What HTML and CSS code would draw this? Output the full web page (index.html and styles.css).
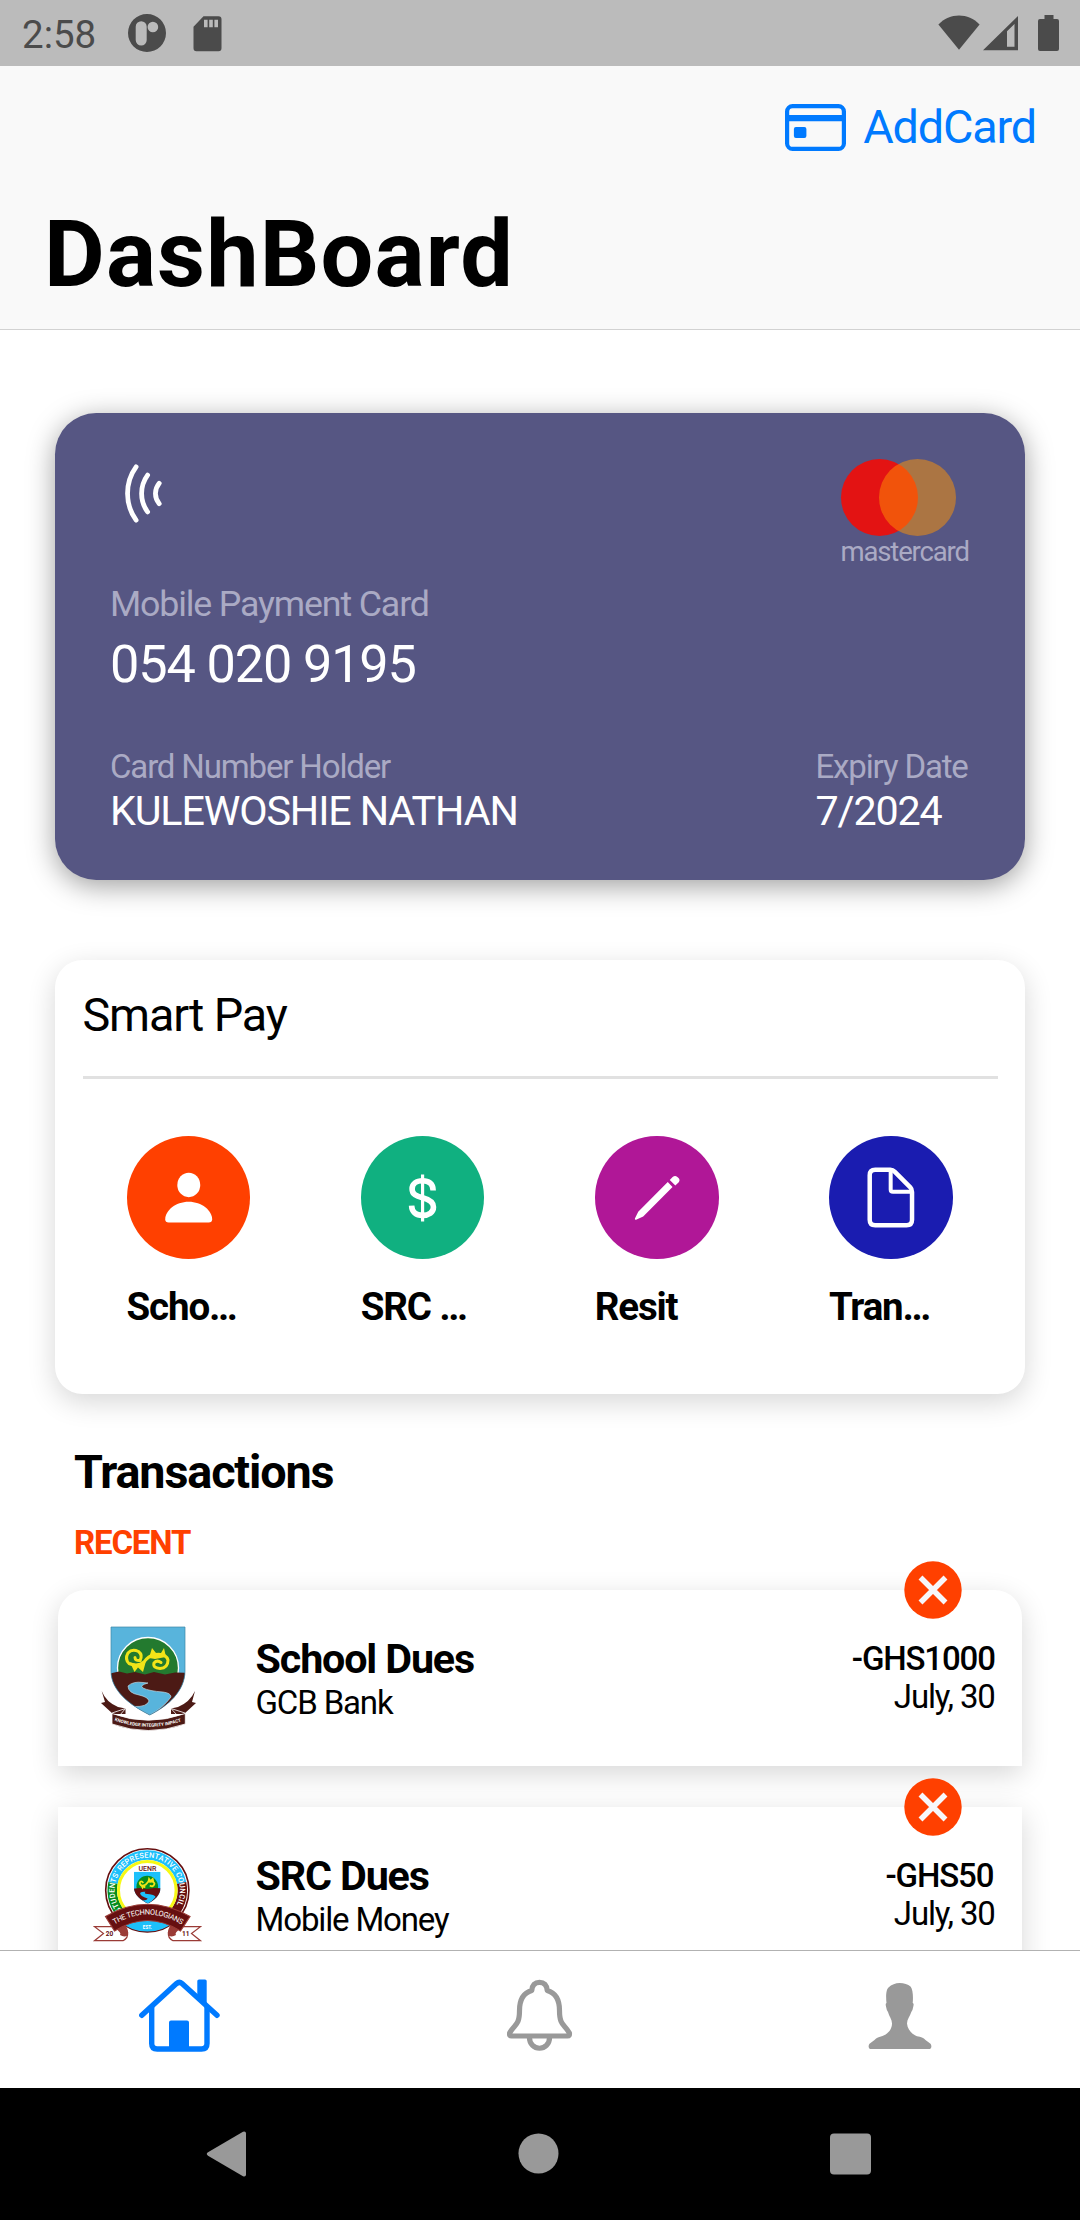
FILE: index.html
```
<!DOCTYPE html>
<html lang="en">
<head>
<meta charset="utf-8">
<title>DashBoard</title>
<link rel="stylesheet" href="styles.css">
</head>
<body>
<div class="screen">
  <div class="status">
    <div class="status-left">
      <span class="clock">2:58</span>
      <svg class="ic-app" width="38" height="38" viewBox="0 0 38 38"><path fill="#4b4b4b" fill-rule="evenodd" d="M19 0a19 19 0 1 1 0 38a19 19 0 1 1 0-38zM13.2 7.2a5.5 5.5 0 0 0-5.5 5.5v13.4a5.5 5.5 0 0 0 11 0V12.700a5.5 5.5 0 0 0-5.5-5.500zM24.900 7.700a5.300 5.300 0 1 0 0 10.600a5.300 5.300 0 1 0 0-10.600z"/></svg>
      <svg class="ic-sd" width="29" height="36" viewBox="0 0 29 36"><path fill="#4b4b4b" fill-rule="evenodd" d="M10.500.3H25.500a3 3 0 0 1 3 3V32.300a3 3 0 0 1-3 3H3.500a3 3 0 0 1-3-3V10.700zM11 3.700v7.500h3.600V3.700zM16.200 3.700v7.500h3.600V3.700zM21.400 3.700v7.500H25V3.700z"/></svg>
    </div>
    <div class="status-right">
      <svg width="42" height="36" viewBox="0 0 42 36"><path fill="#4b4b4b" d="M21 34.800L.4 9.500C6 3.500 13.500.5 21 .5s15 3 20.600 9z"/></svg>
      <svg class="ic-signal" width="36" height="36" viewBox="0 0 36 36"><path fill="#4b4b4b" fill-rule="evenodd" d="M35 1V35.300H0zM24 16.200V31.800H31.500V9z"/></svg>
      <svg width="21" height="37" viewBox="0 0 21 37"><path fill="#4b4b4b" d="M6.500 0h9v4H19a2 2 0 0 1 2 2v28a2 2 0 0 1-2 2H2a2 2 0 0 1-2-2V6a2 2 0 0 1 2-2h4.500z"/></svg>
    </div>
  </div>

  <header class="header">
    <div class="add-card">
      <svg width="61" height="47" viewBox="0 0 61 47"><rect x="2.100" y="2.100" width="56.800" height="42.800" rx="5.500" fill="none" stroke="#007aff" stroke-width="4.200"/><path fill="#007aff" d="M3 11h55v6.300H3z"/><rect x="8.900" y="23" width="12.500" height="11" rx="2" fill="#007aff"/></svg>
      <span>AddCard</span>
    </div>
    <h1 class="title">DashBoard</h1>
  </header>

  <main class="content">
    <section class="card">
      <div class="card-top">
        <svg class="contactless" width="40" height="60" viewBox="0 0 40 60" fill="none" stroke="#fff" stroke-width="4.800" stroke-linecap="round"><path d="M11.100 2.900C-.3 18.500-.3 40.500 11.100 56.100M22.600 11.100C14.600 22 14.600 37 22.600 47.900M34.200 19.300C29.200 25.500 29.200 33.500 34.200 39.700"/></svg>
        <div class="brand">
          <div class="brand-mark"><span class="dot dot-red"></span><span class="dot dot-amber"></span></div>
          <span class="brand-name">mastercard</span>
        </div>
      </div>
      <div class="card-type">Mobile Payment Card</div>
      <div class="card-number">054 020 9195</div>
      <div class="card-foot">
        <div>
          <div class="label">Card Number Holder</div>
          <div class="value">KULEWOSHIE NATHAN</div>
        </div>
        <div class="expiry">
          <div class="label">Expiry Date</div>
          <div class="value">7/2024</div>
        </div>
      </div>
    </section>

    <section class="smart">
      <h2 class="smart-title">Smart Pay</h2>
      <div class="rule"></div>
      <div class="services">
        <div class="service">
          <svg class="bubble school" viewBox="0 0 124 124"><ellipse cx="61.900" cy="49" rx="11.500" ry="12.300" fill="#fff"/><path fill="#fff" d="M61.800 66C75 66 85.300 75 85.300 83.500Q85.300 86.700 81.800 86.700H41.800Q38.300 86.700 38.300 83.500C38.300 75 48.600 66 61.800 66z"/></svg>
          <span class="service-name">Scho…</span>
        </div>
        <div class="service">
          <svg class="bubble src" viewBox="0 0 124 124" fill="none" stroke="#fff"><path stroke-width="5.600" d="M72.300 54.500C72.300 47.500 67.500 44.800 61.700 44.800C55.500 44.800 51.200 48 51.200 53C51.200 58.500 55.500 60.200 61.700 61.900C68.500 63.700 72.600 65.900 72.600 71.200C72.600 76.500 68 79.500 61.700 79.500C55 79.500 50.900 76 50.700 69.800"/><path stroke-width="3.200" d="M61.700 38.700V85.700"/></svg>
          <span class="service-name">SRC …</span>
        </div>
        <div class="service">
          <svg class="bubble resit" viewBox="0 0 124 124"><path fill="#fff" d="M72.900 46L77.700 51L48.300 80.600L41.200 83.900Q39.600 84.200 40 82.600L43.300 75.900zM74.900 44L77.800 41.100Q80.200 39 82.500 41L83.700 42.200Q85.700 44.400 83.700 46.600L80.500 49.500z"/></svg>
          <span class="service-name">Resit</span>
        </div>
        <div class="service">
          <svg class="bubble trans" viewBox="0 0 124 124" fill="none" stroke="#fff" stroke-width="4.500" stroke-linejoin="round"><path d="M46.300 33.900H61.500Q64 33.900 66 35.900L81.500 51.500Q83.200 53.200 83.200 56V84Q83.200 89.500 77.700 89.500H46.300Q40.800 89.500 40.800 84V39.400Q40.800 33.900 46.300 33.900z"/><path stroke-width="4" d="M61.800 34V53.600Q61.800 55.900 64.100 55.900H83"/></svg>
          <span class="service-name">Tran…</span>
        </div>
      </div>
    </section>

    <h2 class="section-title">Transactions</h2>
    <div class="section-tag">RECENT</div>

    <ul class="list">
      <li class="item item-first">
        <svg class="logo" width="120" height="120" viewBox="0 0 120 120">
          <defs><clipPath id="shield"><path id="shield-shape" d="M24 10H98V54C98 74 81 89 62.700 98C43 88 24 74 24 54z"/></clipPath></defs>
          <g clip-path="url(#shield)">
            <path fill="#58b4dc" d="M20 5h82v95H20z"/>
            <circle cx="61" cy="51" r="30.500" fill="#237a2f" stroke="#fff" stroke-width="1.300"/>
            <path fill="#4c1a15" d="M20 57L32 54.500L40 56.500L48 55L58 57.500L67 55L78 57.500L88 55.500L102 56V102H20z"/>
            <path fill="#58b4dc" stroke="#cfe6f0" stroke-width=".6" d="M41 69Q46 64 56 65.500L61 66Q52 68.500 56 71Q62 74 76 75Q84 76 84 80Q76 91 62.700 98Q54 94 47 89.500Q60 90 62 84Q61 80 52 78Q41 76 41 69z"/>
          </g>
          <use href="#shield-shape" fill="none" stroke="#3d87a8" stroke-width=".7"/>
          <g fill="none" stroke="#f2e418" stroke-width="3" stroke-linecap="round"><path d="M53 43.500Q56 38 51.500 34.500Q45 31.500 41 36Q37.500 42 42 46.500Q51 50 57 45Q61 39 68 37.500Q79 36 81 43Q81 51 73 51.500Q65.500 51 67 46Q70 42.500 74 45.500"/><path d="M53 43.500Q48 44 48 40.500"/></g>
          <path fill="#f2e418" d="M62 41L65 31L69 36L74 36L77 31L79 40L68 42zM43 45.500L47.500 55L51 50.500L56 55L59 44L51 47.500z"/>
          <path fill="#4c1a15" d="M14.700 74Q19 85 31 90L38.500 91.500V97L26 97L14 86L18 85z"/>
          <path fill="#4c1a15" d="M108 74Q103 85 91 90L84 91.500V97L97 97L109 86L105 85z"/>
          <path fill="#4c1a15" stroke="#fff" stroke-width=".8" d="M25 96.500Q61 110 98.300 96.500V107Q61 120 25 107z"/>
          <path stroke="#fff" stroke-width=".8" fill="none" d="M25 96L38.500 91.500L33 98M98 96L84 91.500L90 98"/>
          <path id="motto" fill="none" d="M27.500 103.500Q61.500 116 97 103.500"/>
          <text class="motto"><textPath href="#motto" textLength="68">KNOWLEDGE INTEGRITY IMPACT</textPath></text>
        </svg>
        <div class="item-body">
          <div class="item-title">School Dues</div>
          <div class="item-sub">GCB Bank</div>
        </div>
        <div class="item-side">
          <div class="amount">-GHS1000</div>
          <div class="date">July, 30</div>
        </div>
        <svg class="badge" width="58" height="58" viewBox="0 0 58 58"><circle cx="29" cy="29" r="28.700" fill="#ff4000"/><path d="M16.500 16.500L41.500 41.500M41.500 16.500L16.500 41.500" stroke="#f7f7fa" stroke-width="5.500"/></svg>
      </li>
      <li class="item">
        <svg class="logo" width="120" height="120" viewBox="0 0 120 120">
          <circle cx="60.300" cy="56.300" r="41.600" fill="#fff" stroke="#660f10" stroke-width="1.600"/>
          <g fill="none" stroke-width="9.500">
            <path stroke="#1cc0fb" d="M26 49A35 35 0 0 1 94.600 49"/>
            <path stroke="#078c1c" d="M26 49A35 35 0 0 0 37 82.500"/>
            <path stroke="#660f10" d="M94.600 49A35 35 0 0 1 83.600 82.500"/>
          </g>
          <circle cx="60.300" cy="56.300" r="28.800" fill="#fff" stroke="#f6f915" stroke-width="3"/>
          <path id="ring" fill="none" d="M34.700 76.700A32.700 32.700 0 1 1 86.200 76.300"/>
          <text class="ring-text"><textPath href="#ring" textLength="139">STUDENTS’ REPRESENTATIVE COUNCIL</textPath></text>
          <text class="uenr" x="60.500" y="36.500">UENR</text>
          <g transform="translate(38.300 34.200) scale(.36)">
            <g clip-path="url(#shield)">
              <path fill="#1cc0fb" d="M20 5h82v95H20z"/>
              <circle cx="61" cy="51" r="30" fill="#078c1c"/>
              <path fill="#660f10" d="M20 57L40 55L61 58L80 55L102 56V102H20z"/>
              <path fill="#1cc0fb" d="M41 69Q46 64 56 65.500Q52 68.500 56 71Q84 74 84 80Q76 91 62.700 98L47 89.500Q60 90 62 84Q41 78 41 69z"/>
            </g>
            <path fill="none" stroke="#f2e418" stroke-width="5" d="M50 41Q44 32 40 41Q42 50 51 48Q57 47 60 42Q63 36 69 38Q80 36 81 43Q78 54 68 48M64 39L66 30L70 36L76 30L78 39M45 47L48 54L51 49L55 54"/>
          </g>
          <path fill="#1cc0fb" d="M34 88Q60 78 87 88Q76 97.500 60.500 97.500Q44 97.500 34 88z"/>
          <text class="est" x="60.300" y="94.500">EST.</text>
          <g fill="#fff" stroke="#9a3b36" stroke-width="1.200">
            <path d="M32 88Q38 92 40.500 98Q41.500 104 36 106.700H7.500L16.500 99.500L7.500 92.700H25z"/>
            <path d="M90 88Q84 92 81.500 98Q80.500 104 86 106.700H113.500L104.500 99.500L113.500 92.700H96z"/>
          </g>
          <path fill="#9a3b36" d="M28 94L36 88Q43 96 40.500 101.500Q37 103.500 33 101Q35 99 28 94zM94 94L86 88Q79 96 81.500 101.500Q85 103.500 89 101Q87 99 94 94z"/>
          <path fill="#660f10" stroke="#9a3b36" stroke-width="1.200" d="M18.500 82.500Q60.500 58 103 82.500L93.500 97Q60.500 76 27.500 97z"/>
          <path id="techno" fill="none" d="M27.500 90.500Q60.500 70.500 94.500 90.500"/>
          <text class="techno"><textPath href="#techno" textLength="71">THE TECHNOLOGIANS</textPath></text>
          <text class="year" x="22.500" y="102">20</text>
          <text class="year" x="98.700" y="102">11</text>
        </svg>
        <div class="item-body">
          <div class="item-title">SRC Dues</div>
          <div class="item-sub">Mobile Money</div>
        </div>
        <div class="item-side">
          <div class="amount amount-short">-GHS50</div>
          <div class="date">July, 30</div>
        </div>
        <svg class="badge" width="58" height="58" viewBox="0 0 58 58"><circle cx="29" cy="29" r="28.700" fill="#ff4000"/><path d="M16.500 16.500L41.500 41.500M41.500 16.500L16.500 41.500" stroke="#f7f7fa" stroke-width="5.500"/></svg>
      </li>
    </ul>
  </main>

  <nav class="tabs">
    <div class="tab tab-home"><svg width="81" height="74" viewBox="0 0 81 74"><g fill="none" stroke="#007aff" stroke-width="5.400" stroke-linecap="round"><path d="M2.800 36.300L37.500 4.600Q40.300 2.200 43 4.600L78 36.300"/><path stroke-linecap="butt" d="M12.700 28V64.500Q12.700 70 18.200 70H62.500Q68 70 68 64.500V28"/></g><path fill="#007aff" d="M58.300 15V2Q58.300.4 60 .4H66Q67.700.4 67.700 2V26L58.300 18zM30 69V43.500Q30 41.500 32 41.500H48Q50 41.500 50 43.500V69z"/></svg></div>
    <div class="tab"><svg width="66" height="74" viewBox="0 0 66 74" fill="none" stroke="#999" stroke-width="5.200" stroke-linejoin="round"><path d="M24.800 11.500C25 6 28 3.300 32.500 3.300S40 6 40.200 11.500C49 14 52.500 21 52.500 31.500C52.500 47 57.500 45 62.400 54Q62.900 57 60.500 57H4.500Q2.100 57 2.600 54C7.500 45 12.500 47 12.500 31.500C12.500 21 16 14 24.800 11.500z"/><path d="M22.400 58C22.400 73 42.600 73 42.600 58"/></svg></div>
    <div class="tab tab-user"><svg width="64" height="66" viewBox="0 0 64 66"><path fill="#999" d="M31.700 0C36 0 40 1.200 42.500 3.500C45 6.500 45.300 14 44.700 20Q46.200 20.500 45.300 23.500Q44.800 27 43.300 29C42 33 39 36.500 39 40.500C39.500 47 44.500 51.500 49 53.300C53 54 55.500 54.500 57.500 57L62.500 60.800Q64.500 64 62 66H2Q-.5 64 1.500 60.800L6.500 57C8.500 54.500 11 54 14.500 53C19 51.500 24 47 24 40.500C24 36.500 21 33 20 29Q18.500 27 18 23.500Q17.200 20.500 18.500 20C17.800 14 18 6.500 20.500 4.500C23.500 1.500 27.500 0 31.700 0z"/></svg></div>
  </nav>

  <div class="sysnav">
    <svg width="41" height="46" viewBox="0 0 41 46"><path fill="#999" d="M2 21.300L37 .8Q40 0 40 2.500V43.500Q40 46 37 45.200L2 24.700Q-.5 23 2 21.300z"/></svg>
    <svg width="41" height="42" viewBox="0 0 41 42"><circle cx="20.500" cy="20.500" r="20" fill="#999"/></svg>
    <svg width="41" height="42" viewBox="0 0 41 42"><rect width="41" height="41" y=".5" rx="4" fill="#999"/></svg>
  </div>
</div>
</body>
</html>
```
FILE: styles.css
```
* { box-sizing: border-box; }

body {
  margin: 0;
  font-family: Roboto, "Liberation Sans", sans-serif;
  color: #000;
  background: #fff;
}

h1, h2, ul { margin: 0; padding: 0; font-weight: 400; list-style: none; }

svg { display: block; flex: none; }

.screen {
  width: 1080px;
  height: 2220px;
  display: flex;
  flex-direction: column;
  letter-spacing: -1.150px;
  overflow: hidden;
}

/* System status bar */
.status {
  height: 66px;
  flex: none;
  background: #bbb;
  color: #4b4b4b;
  display: flex;
  justify-content: space-between;
  padding: 0 21.500px 0 22px;
}

.status-left, .status-right { display: flex; }
.clock { font-size: 38.500px; line-height: 70px; letter-spacing: 0; width: 105.500px; }
.ic-app { margin-top: 14px; }
.ic-sd { margin: 16px 0 0 27.500px; }
.status-right { padding-top: 15px; }
.ic-signal { margin: 0 19px 0 3px; }

/* Navigation header */
.header {
  height: 264px;
  flex: none;
  background: #f9f9f9;
  border-bottom: 1px solid #d2d2d2;
  padding: 31px 44px 0;
}

.add-card {
  display: flex;
  justify-content: flex-end;
  align-items: center;
  gap: 17.500px;
  height: 60px;
  font-size: 46.750px;
  line-height: 60px;
  color: #007aff;
}

.title {
  margin-top: 42px;
  font-size: 93.500px;
  line-height: 110px;
  font-weight: 700;
  letter-spacing: 1.150px;
}

.content {
  flex: 1;
  min-height: 0;
  padding: 82.500px 55px 0;
  overflow: hidden;
}

/* Payment card */
.card {
  height: 467.500px;
  padding: 46.500px 55px 0;
  border-radius: 41.250px;
  background: #565683;
  color: #fff;
  box-shadow: 0 6px 28px rgba(0, 0, 0, .38);
}

.card-top { display: flex; justify-content: space-between; height: 109px; }
.contactless { margin: 5px 0 0 15px; }
.brand { width: 129.500px; }
.brand-mark { display: flex; height: 77px; }
.dot { width: 77px; height: 77px; border-radius: 50%; }
.dot-red { background: #e31313; }
.dot-amber { background: rgba(255, 147, 3, .5); margin-left: -38.500px; }
.brand-name { display: block; font-size: 27.500px; line-height: 32px; color: #aaaac4; }
.card-type { margin-top: 15px; font-size: 35.750px; line-height: 42px; color: #aaaac4; }
.card-number { margin-top: 9px; font-size: 52.250px; line-height: 61px; }
.card-foot { margin-top: 52px; display: flex; justify-content: space-between; }
.label { font-size: 33px; line-height: 39px; color: #aaaac4; }
.value { margin-top: 1px; font-size: 41.250px; line-height: 48px; letter-spacing: -1.130px; }
.expiry { width: 154.500px; }

/* Smart Pay panel */
.smart {
  margin-top: 80px;
  height: 434px;
  padding: 27px 27.500px 0;
  border-radius: 27.500px;
  background: #fff;
  box-shadow: 0 8px 28px rgba(0, 0, 0, .16);
}

.smart-title { font-size: 46.750px; line-height: 56px; }
.rule { margin-top: 33px; height: 3px; background: #e1e1e1; }
.services { margin: 56.500px 0 0 44px; display: flex; gap: 110.400px; }
.service { width: 123.750px; }
.bubble { width: 123.750px; height: 123.750px; border-radius: 50%; }
.school { background: #ff4000; }
.src { background: #10b080; }
.resit { background: #b01797; }
.trans { background: #1a1cb0; }
.service-name { display: block; margin-top: 24.500px; font-size: 38.500px; line-height: 45px; font-weight: 700; white-space: nowrap; }

/* Transactions */
.section-title { margin: 49.500px 0 0 19px; font-size: 46.750px; line-height: 56px; font-weight: 700; }
.section-tag { margin: 23.500px 0 0 19px; font-size: 33px; line-height: 39px; font-weight: 700; color: #ff4000; }
.list { margin: 27.500px 2.750px 0; display: flex; flex-direction: column; gap: 41px; }

.item {
  position: relative;
  height: 176px;
  display: flex;
  padding: 0 27.500px 0 29.300px;
  background: #fff;
  box-shadow: 0 8px 28px rgba(0, 0, 0, .16);
}

.item-first { border-radius: 27.500px 27.500px 0 0; }
.logo { margin-top: 27px; }
.item-body { margin: 45px 0 0 48.500px; flex: 1; }
.item-title { font-size: 41.250px; line-height: 48px; font-weight: 700; }
.item-sub { font-size: 33px; line-height: 39px; }
.item-side { margin-top: 50.500px; text-align: right; font-size: 33px; line-height: 38px; }
.amount { font-weight: 500; }
.amount-short { margin-right: 1.500px; }
.badge { position: absolute; right: 60px; top: -29px; }

.motto { font-size: 4.500px; font-weight: 700; fill: #fff; letter-spacing: 0; }
.ring-text { font-size: 7.500px; font-weight: 500; fill: #fff; letter-spacing: 0; }
.techno { font-size: 7.500px; fill: #fff; letter-spacing: 0; }
.uenr { font-size: 7px; font-weight: 500; fill: #660f10; text-anchor: middle; letter-spacing: 0; }
.est { font-size: 4.500px; font-weight: 700; fill: #fff; text-anchor: middle; letter-spacing: 0; }
.year { font-size: 6.500px; font-weight: 700; fill: #660f10; text-anchor: middle; letter-spacing: 0; }

/* Bottom tabs */
.tabs {
  height: 138px;
  flex: none;
  background: #fff;
  border-top: 1px solid #b2b2b2;
  display: grid;
  grid-template-columns: repeat(3, 1fr);
  justify-items: center;
  padding-top: 28px;
}

.tab-home { padding-right: 2px; }
.tab-user { padding-top: 4px; }

.sysnav {
  height: 132px;
  flex: none;
  background: #000;
  display: flex;
  justify-content: center;
  align-items: center;
  gap: 271px;
  padding-right: 3px;
}
```
